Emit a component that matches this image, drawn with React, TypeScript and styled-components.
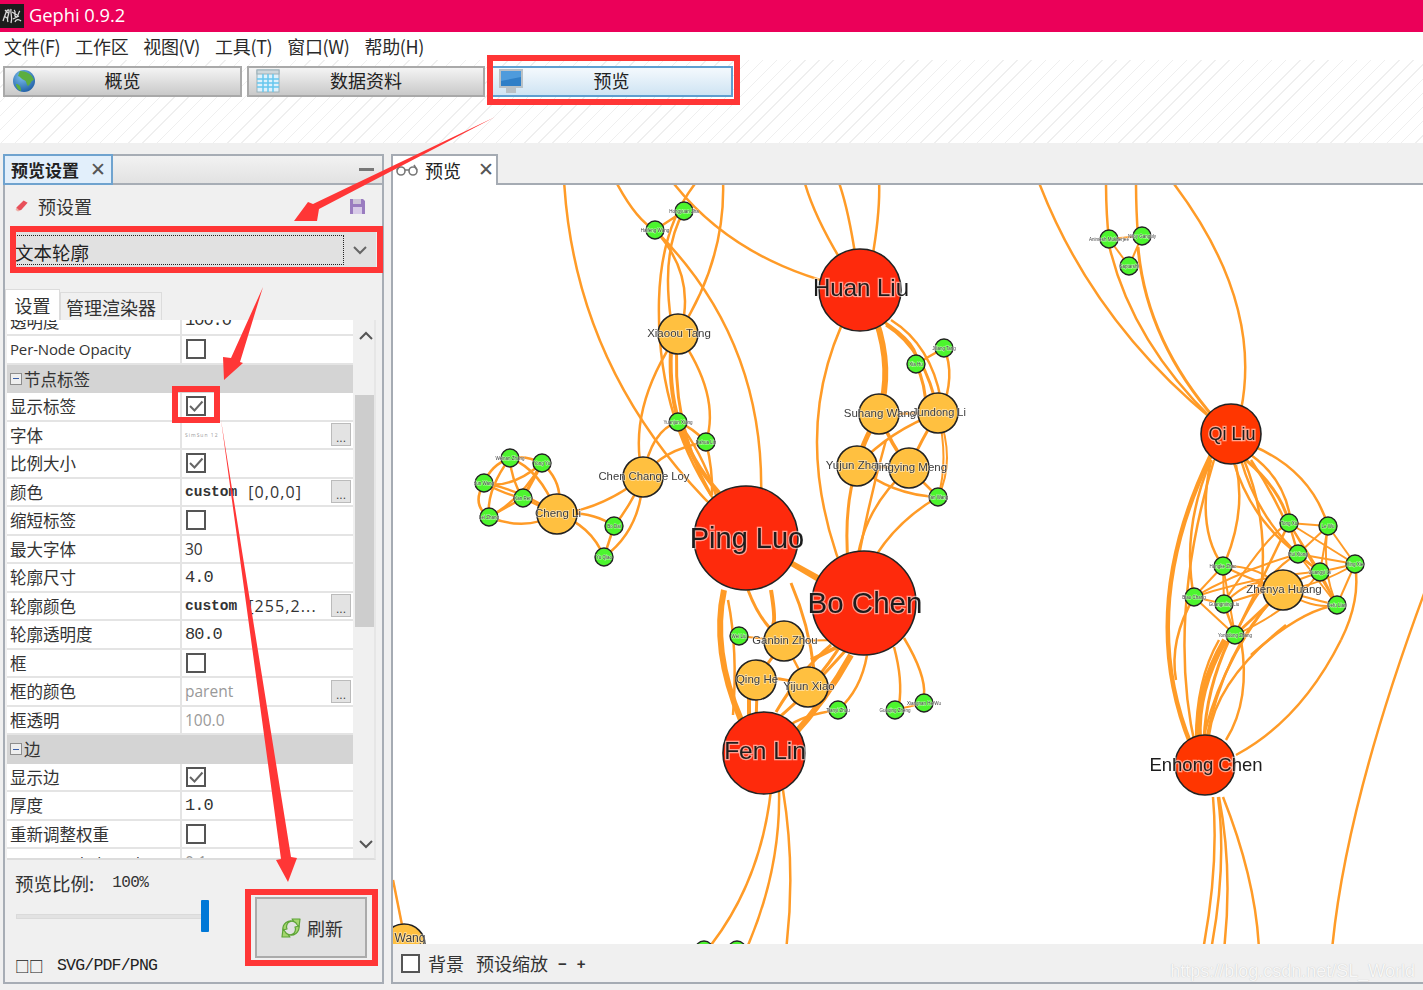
import styled, { createGlobalStyle } from 'styled-components';

const CJK = '"Noto Sans CJK SC", "Liberation Sans", sans-serif';
const SANS = '"Open Sans", "Noto Sans CJK SC", sans-serif';
const MONO = '"Liberation Mono", "Noto Sans CJK SC", monospace';

type RowData =
  | { kind: 'group'; label: string }
  | { kind: 'check'; label: string; checked: boolean }
  | { kind: 'text'; label: string; value: string; muted?: boolean; mono?: boolean; more?: boolean }
  | { kind: 'custom'; label: string; value: string };

const rows: RowData[] = [
  { kind: 'text', label: '透明度', value: '100.0', mono: true },
  { kind: 'check', label: 'Per-Node Opacity', checked: false },
  { kind: 'group', label: '节点标签' },
  { kind: 'check', label: '显示标签', checked: true },
  { kind: 'text', label: '字体', value: '', more: true },
  { kind: 'check', label: '比例大小', checked: true },
  { kind: 'custom', label: '颜色', value: '[0,0,0]' },
  { kind: 'check', label: '缩短标签', checked: false },
  { kind: 'text', label: '最大字体', value: '30' },
  { kind: 'text', label: '轮廓尺寸', value: '4.0', mono: true },
  { kind: 'custom', label: '轮廓颜色', value: '[255,2...' },
  { kind: 'text', label: '轮廓透明度', value: '80.0', mono: true },
  { kind: 'check', label: '框', checked: false },
  { kind: 'text', label: '框的颜色', value: 'parent', muted: true, more: true },
  { kind: 'text', label: '框透明', value: '100.0', muted: true },
  { kind: 'group', label: '边' },
  { kind: 'check', label: '显示边', checked: true },
  { kind: 'text', label: '厚度', value: '1.0', mono: true },
  { kind: 'check', label: '重新调整权重', checked: false },
  { kind: 'text', label: 'Min. rescaled weight', value: '0.1', muted: true },
];

// edges: path + stroke width, page coordinates
const edges: [string, number][] = [
  ['M563 180 Q575 390 745 538', 2.5],
  ['M614 180 Q635 220 654 230', 2.5],
  ['M654 230 Q765 340 760 500', 2.5],
  ['M670 180 Q735 265 859 290', 2.5],
  ['M697 180 Q660 225 658 300 Q655 420 720 510', 2.5],
  ['M722 180 Q725 260 677 334', 2.5],
  ['M654 230 Q695 275 680 330', 2.5],
  ['M683 211 Q660 250 670 320', 2.5],
  ['M683 211 L654 230', 2.5],
  ['M670 350 Q665 440 725 500', 4],
  ['M677 334 Q668 420 710 495', 3],
  ['M677 334 Q720 395 705 442', 2.5],
  ['M677 334 Q625 410 642 477', 2.5],
  ['M677 422 Q700 450 715 495', 2.5],
  ['M705 442 Q712 470 711 495', 2.5],
  ['M677 422 Q650 430 642 477', 2.5],
  ['M705 442 Q660 450 642 477', 2.5],
  ['M677 422 Q692 428 705 442', 2.5],
  ['M642 477 Q600 510 556 514', 2.5],
  ['M642 477 Q640 530 603 557', 2.5],
  ['M642 477 Q630 505 613 526', 2.5],
  ['M613 526 L603 557', 2.5],
  ['M556 514 Q590 510 613 526', 2.5],
  ['M556 514 Q590 525 603 557', 2.5],
  ['M509 458 Q525 455 541 463', 2.5],
  ['M509 458 Q490 465 483 483', 2.5],
  ['M509 458 Q510 480 522 498', 2.5],
  ['M509 458 Q485 490 488 517', 2.5],
  ['M509 458 Q540 470 556 514', 2.5],
  ['M541 463 Q510 490 483 483', 2.5],
  ['M541 463 L522 498', 3.5],
  ['M541 463 Q520 500 488 517', 2.5],
  ['M541 463 Q565 485 556 514', 2.5],
  ['M483 483 Q505 495 522 498', 2.5],
  ['M483 483 Q470 505 488 517', 2.5],
  ['M483 483 Q520 490 556 514', 2.5],
  ['M522 498 L488 517', 2.5],
  ['M522 498 L556 514', 2.5],
  ['M488 517 Q525 532 556 514', 2.5],
  ['M803 180 Q815 225 859 290', 2.5],
  ['M837 180 Q850 215 859 290', 2.5],
  ['M878 180 Q880 220 865 290', 2.5],
  ['M859 290 Q775 430 855 603', 2.5],
  ['M875 320 Q892 370 878 414', 6],
  ['M878 414 Q860 445 856 466', 5],
  ['M885 325 Q925 350 937 413', 3],
  ['M880 320 Q920 345 915 364', 3],
  ['M915 364 Q925 385 925 410', 3],
  ['M890 320 Q930 345 940 400', 2.5],
  ['M915 364 L943 348', 2.5],
  ['M943 348 Q955 375 940 413', 2.5],
  ['M878 414 Q890 445 908 468', 3.5],
  ['M937 413 Q920 440 908 468', 3],
  ['M878 414 L937 413', 2.5],
  ['M937 413 Q890 430 856 466', 2.5],
  ['M856 466 L908 468', 3],
  ['M937 413 Q955 460 937 497', 2],
  ['M937 413 Q948 460 937 497', 2],
  ['M856 466 Q890 495 937 497', 2.5],
  ['M908 468 L937 497', 2.5],
  ['M856 466 Q838 520 852 603', 3],
  ['M908 468 Q860 510 855 570', 2.5],
  ['M885 440 Q865 510 852 590', 2.5],
  ['M937 497 Q880 530 858 590', 2.5],
  ['M745 538 L863 603', 5],
  ['M745 538 Q800 570 850 600', 3],
  ['M723 590 Q710 650 740 720', 6],
  ['M727 600 Q737 650 732 715', 2.5],
  ['M747 590 Q760 625 783 641', 3],
  ['M770 590 Q775 620 772 625', 4],
  ['M790 583 Q808 625 813 670', 3],
  ['M738 636 L783 641', 2],
  ['M783 641 L840 640', 2],
  ['M748 690 L748 725', 4],
  ['M756 690 L755 725', 3],
  ['M755 680 Q780 675 807 687', 3],
  ['M783 641 L755 680', 3],
  ['M783 641 L807 687', 2.5],
  ['M810 660 L840 645', 4],
  ['M807 687 Q835 660 863 603', 3],
  ['M850 655 Q825 700 790 738', 6],
  ['M845 650 Q805 695 775 720', 3],
  ['M830 645 Q800 670 775 712', 3],
  ['M866 655 Q860 690 837 710', 2.5],
  ['M837 710 Q800 715 785 728', 2.5],
  ['M893 647 Q902 680 898 705', 2.5],
  ['M903 638 Q925 675 923 695', 2.5],
  ['M894 710 L923 703', 2],
  ['M770 790 Q760 880 710 945', 2.5],
  ['M778 790 Q780 870 745 950', 2.5],
  ['M782 790 Q795 870 785 950', 2.5],
  ['M392 880 L402 930', 2.5],
  ['M1037 180 Q1090 320 1212 420', 2.5],
  ['M1105 180 Q1105 215 1108 239', 2.5],
  ['M1108 245 Q1130 340 1212 420', 2.5],
  ['M1135 180 Q1135 210 1137 236', 2.5],
  ['M1137 247 Q1145 340 1215 420', 3],
  ['M1170 180 Q1262 300 1240 410', 2.5],
  ['M1108 239 L1141 236', 2],
  ['M1108 239 L1128 266', 2],
  ['M1141 236 L1128 266', 2],
  ['M1210 455 Q1135 610 1190 745', 4.5],
  ['M1213 460 Q1165 620 1195 750', 2.5],
  ['M1210 460 Q1195 530 1222 566', 2.5],
  ['M1235 465 Q1245 510 1225 560', 2.5],
  ['M1210 460 Q1180 530 1193 597', 2.5],
  ['M1245 460 Q1280 490 1288 523', 3],
  ['M1250 460 Q1270 490 1285 523', 2.5],
  ['M1250 455 Q1285 480 1290 523', 2.5],
  ['M1250 445 Q1310 470 1327 526', 2.5],
  ['M1232 460 Q1250 520 1297 554', 2.5],
  ['M1240 460 Q1260 530 1319 572', 2.5],
  ['M1243 460 Q1268 520 1260 590', 2.5],
  ['M1288 523 L1327 526', 2],
  ['M1288 523 L1297 554', 2.5],
  ['M1288 523 L1319 572', 2],
  ['M1288 523 L1354 564', 2],
  ['M1288 523 L1336 605', 2],
  ['M1288 523 Q1265 535 1222 604', 2],
  ['M1327 526 L1297 554', 2],
  ['M1327 526 L1319 572', 2],
  ['M1327 526 L1354 564', 2],
  ['M1327 526 Q1320 570 1336 605', 2],
  ['M1297 554 L1319 572', 2],
  ['M1297 554 L1354 564', 2],
  ['M1297 554 L1336 605', 2],
  ['M1319 572 L1354 564', 2],
  ['M1319 572 L1336 605', 2],
  ['M1354 564 L1336 605', 2],
  ['M1354 564 Q1320 585 1282 590', 2],
  ['M1282 590 Q1310 610 1336 605', 2],
  ['M1222 566 Q1260 565 1282 590', 2],
  ['M1222 566 L1193 597', 2],
  ['M1222 566 L1223 604', 2],
  ['M1222 566 L1234 635', 2],
  ['M1222 566 Q1270 590 1336 605', 2],
  ['M1193 597 L1223 604', 2],
  ['M1193 597 Q1240 570 1297 554', 2],
  ['M1193 597 L1234 635', 2],
  ['M1193 597 Q1260 575 1319 572', 2],
  ['M1223 604 L1234 635', 2.5],
  ['M1223 604 Q1255 570 1282 590', 2],
  ['M1223 604 Q1270 590 1319 572', 2],
  ['M1234 635 L1282 590', 3],
  ['M1234 635 Q1265 570 1297 554', 2.5],
  ['M1234 635 Q1270 560 1288 523', 2.5],
  ['M1234 635 Q1290 610 1319 572', 2],
  ['M1224 640 Q1195 690 1198 740', 6],
  ['M1228 640 Q1205 690 1203 740', 3],
  ['M1218 640 Q1195 680 1195 740', 2.5],
  ['M1240 640 Q1250 700 1225 740', 2.5],
  ['M1282 590 Q1225 640 1205 740', 2.5],
  ['M1270 600 Q1215 670 1200 750', 2.5],
  ['M1285 625 Q1215 680 1208 735', 2.5],
  ['M1340 640 Q1300 720 1235 755', 2.5],
  ['M1354 564 Q1360 600 1340 640', 2.5],
  ['M1250 655 Q1300 610 1336 605', 2.5],
  ['M1193 597 Q1168 640 1175 680', 2.5],
  ['M1212 797 Q1218 865 1202 950', 2.5],
  ['M1217 797 Q1226 865 1210 950', 2.5],
  ['M1218 797 Q1232 870 1223 950', 2.5],
  ['M1222 797 Q1255 880 1258 950', 2.5],
  ['M1430 575 Q1345 800 1331 950', 2.5],
];

const bigNodes: { x: number; y: number; r: number; fill: string; label: string; size: number; dy: number }[] = [
  { x: 859, y: 290, r: 41, fill: '#fe2a0c', label: 'Huan Liu', size: 24, dy: -3 },
  { x: 745, y: 538, r: 52, fill: '#fe2a0c', label: 'Ping Luo', size: 29, dy: 0 },
  { x: 863, y: 603, r: 52, fill: '#fe2a0c', label: 'Bo Chen', size: 29.5, dy: -1 },
  { x: 763, y: 753, r: 41, fill: '#fe2a0c', label: 'Fen Lin', size: 24.5, dy: -3 },
  { x: 1230, y: 434, r: 30, fill: '#ff3600', label: 'Qi Liu', size: 18, dy: 0 },
  { x: 1204, y: 765, r: 30, fill: '#ff3600', label: 'Enhong Chen', size: 18.5, dy: -1 },
  { x: 677, y: 334, r: 20, fill: '#ffc040', label: 'Xiaoou Tang', size: 11.5, dy: -1 },
  { x: 642, y: 477, r: 20, fill: '#ffc040', label: 'Chen Change Loy', size: 11.3, dy: -1 },
  { x: 556, y: 514, r: 20, fill: '#ffc040', label: 'Cheng Li', size: 11.5, dy: -1 },
  { x: 878, y: 414, r: 20, fill: '#ffc040', label: 'Suhang Wang', size: 11.5, dy: -1 },
  { x: 937, y: 413, r: 20, fill: '#ffc040', label: 'Jundong Li', size: 11, dy: -1 },
  { x: 856, y: 466, r: 20, fill: '#ffc040', label: 'Yujun Zhang', size: 11.5, dy: -1 },
  { x: 908, y: 468, r: 20, fill: '#ffc040', label: 'Jingying Meng', size: 11.5, dy: -1 },
  { x: 783, y: 641, r: 20, fill: '#ffc040', label: 'Ganbin Zhou', size: 11.3, dy: -1 },
  { x: 755, y: 680, r: 20, fill: '#ffc040', label: 'Qing He', size: 11.5, dy: -1 },
  { x: 807, y: 687, r: 20, fill: '#ffc040', label: 'Yijun Xiao', size: 11.5, dy: -1 },
  { x: 1282, y: 590, r: 20, fill: '#ffc040', label: 'Zhenya Huang', size: 11.5, dy: -1 },
  { x: 403, y: 945, r: 21, fill: '#ffc040', label: 'Wang', size: 12, dy: -7 },
];

const greenNodes: [number, number, string][] = [
  [683, 211, 'Hongyuan Zha'], [654, 230, 'Haifeng Wang'], [943, 348, 'Jiliang Tang'], [915, 364, 'Xia Hu'],
  [677, 422, 'Yuanjun Xiong'], [705, 442, 'Dahua Lin'], [509, 458, 'Weinan Zhang'], [541, 463, 'Yong Yu'],
  [483, 483, 'Jun Wang'], [522, 498, 'Kan Ren'], [488, 517, 'Lei Zhang'], [613, 526, 'Bo Dai'], [603, 557, 'Yu Qiao'],
  [937, 497, 'Yan Wang'], [738, 636, 'Wei Liu'], [837, 710, 'Tianyi Zhou'], [894, 710, 'Guoqing Zheng'],
  [923, 703, 'Xiangnan He Wu'], [1108, 239, 'Animesh Mukherjee'], [1141, 236, 'Niloy Ganguly'], [1128, 266, 'Saptarshi'],
  [1288, 523, 'Tong Xu'], [1327, 526, 'Le Wu'], [1297, 554, 'Hui Xiong'], [1319, 572, 'Guangyi Lv'],
  [1354, 564, 'Xing Xie'], [1336, 605, 'Defu Lian'], [1222, 566, 'Hongke Zhao'], [1193, 597, 'Biao Chang'],
  [1223, 604, 'Guangming Liu'], [1234, 635, 'Yongdong Zhang'], [703, 950, ''], [736, 950, ''],
];

const GlobalStyle = createGlobalStyle`
  html, body {
    margin: 0;
    padding: 0;
    background: #f0f0f0;
    overflow: hidden;
  }
  * {
    box-sizing: border-box;
  }
`;

const Window = styled.div`
  position: relative;
  width: 1423px;
  height: 990px;
  overflow: hidden;
  display: flex;
  flex-direction: column;
  background: #f0f0f0;
  color: #222;
  font-family: ${CJK};
`;

const TitleBar = styled.div`
  display: flex;
  align-items: center;
  gap: 5px;
  height: 32px;
  flex: none;
  padding-bottom: 4px;
  background: #eb0059;
  color: #fff;
  font-family: ${SANS};
  font-size: 18.3px;
`;

const MenuBar = styled.div`
  display: flex;
  align-items: center;
  gap: 15px;
  height: 28px;
  flex: none;
  padding-left: 4px;
  background: #fff;
  font-size: 18px;
  letter-spacing: -0.35px;
  color: #2a2a2a;
`;

const Toolbar = styled.div`
  display: flex;
  align-items: flex-start;
  gap: 5px;
  height: 83px;
  flex: none;
  padding: 6px 0 0 3px;
  background: repeating-linear-gradient(135deg, #fff 0 9px, #efefef 9px 10px);
`;

const ModeButton = styled.div<{ $width: number; $active?: boolean }>`
  position: relative;
  display: flex;
  align-items: center;
  justify-content: center;
  width: ${p => p.$width}px;
  height: 31px;
  padding-bottom: 3px;
  border: 2px solid ${p => (p.$active ? '#5f9fd0' : '#a9a9a9')};
  background: ${p =>
    p.$active ? 'linear-gradient(#f4f9fd, #cfe4f3)' : 'linear-gradient(#f4f4f4, #c9c9c9)'};
  font-size: 18px;
  color: #222;
  svg {
    position: absolute;
    left: 7px;
    top: 1px;
  }
`;

const Workspace = styled.div`
  display: flex;
  gap: 7px;
  flex: 1;
  min-height: 0;
  padding: 11px 0 6px 3px;
`;

const LeftPanel = styled.section`
  display: flex;
  flex-direction: column;
  width: 381px;
  flex: none;
`;

const PanelTabs = styled.div`
  display: flex;
  align-items: stretch;
  height: 31px;
  flex: none;
`;

const ActiveDockTab = styled.div`
  display: flex;
  align-items: center;
  gap: 11px;
  width: 110px;
  padding-left: 6px;
  border: 2px solid #6fa3cf;
  background: #e2effb;
  font-size: 17px;
  font-weight: 700;
  color: #222;
`;

const CloseMark = styled.span`
  font-family: "Liberation Sans", sans-serif;
  font-size: 19px;
  font-weight: 400;
  line-height: 1;
  color: #555;
`;

const DockStrip = styled.div`
  flex: 1;
  display: flex;
  align-items: center;
  justify-content: flex-end;
  padding-right: 8px;
  border-top: 2px solid #a7adb5;
  border-right: 2px solid #a7adb5;
  border-bottom: 2px solid #a7adb5;
  background: linear-gradient(#f2f2f2, #e2e2e2);
`;

const Minimize = styled.i`
  display: block;
  width: 15px;
  height: 3px;
  background: #777;
`;

const PanelBody = styled.div`
  flex: 1;
  display: flex;
  flex-direction: column;
  min-height: 0;
  padding: 0 2px;
  border: 2px solid #a7adb5;
  border-top: 0;
  background: #f0f0f0;
`;

const PresetRow = styled.div`
  display: flex;
  align-items: center;
  gap: 8px;
  height: 42px;
  flex: none;
  padding: 0 15px 0 7px;
  font-size: 18px;
  color: #333;
`;

const PresetSave = styled.span`
  margin-left: auto;
  display: flex;
`;

const Combo = styled.div`
  display: flex;
  align-items: center;
  height: 36px;
  flex: none;
  margin: 5px 4px 0 6px;
  padding: 2px 0 2px 1px;
  background: #e1e1e1;
`;

const ComboValue = styled.div`
  display: flex;
  align-items: center;
  width: 330px;
  height: 30px;
  padding-top: 3px;
  border: 1px dotted #222;
  font-size: 18.5px;
  color: #222;
`;

const ComboArrow = styled.div`
  flex: 1;
  display: flex;
  justify-content: center;
  color: #666;
`;

const InnerTabs = styled.div`
  display: flex;
  align-items: flex-end;
  height: 31px;
  flex: none;
  margin: 21px 0 0 -2px;
`;

const InnerTab = styled.div<{ $active?: boolean }>`
  display: flex;
  align-items: center;
  justify-content: center;
  width: ${p => (p.$active ? 55 : 102)}px;
  height: ${p => (p.$active ? 31 : 28)}px;
  border: 1px solid #dcdcdc;
  border-bottom: 0;
  background: ${p => (p.$active ? '#fff' : '#f0f0f0')};
  font-size: 18px;
  color: #333;
`;

const PropertyFrame = styled.div`
  display: grid;
  grid-template-columns: 346px 26px;
  height: 540px;
  flex: none;
  margin-right: 4px;
  border-bottom: 2px solid #dcdcdc;
  border-right: 2px solid #e6e6e6;
  overflow: hidden;
  background: #fff;
`;

const PropertyList = styled.div`
  overflow: hidden;
  background: #fff;
`;

const PropertyRows = styled.div`
  margin-top: -12.5px;
`;

const Row = styled.div<{ $group?: boolean }>`
  display: grid;
  grid-template-columns: 173px 1fr;
  height: 28.5px;
  align-items: stretch;
  background: ${p => (p.$group ? '#d4d4d4' : '#fff')};
  border-bottom: ${p => (p.$group ? '0' : '2px solid #e4e4e4')};
`;

const RowLabel = styled.div<{ $latin?: boolean }>`
  display: flex;
  align-items: center;
  padding-left: 3px;
  font-family: ${p => (p.$latin ? SANS : CJK)};
  font-size: ${p => (p.$latin ? 15 : 16.5)}px;
  letter-spacing: ${p => (p.$latin ? -0.15 : 0)}px;
  color: #333;
  white-space: nowrap;
`;

const GroupRow = styled.div`
  display: flex;
  align-items: center;
  gap: 2px;
  padding-left: 3px;
  grid-column: 1 / 3;
  font-size: 16.5px;
  color: #333;
`;

const Toggle = styled.span`
  display: flex;
  align-items: center;
  justify-content: center;
  width: 12px;
  height: 12px;
  border: 1px solid #8d8d8d;
  background: #eee;
  &::after {
    content: '';
    width: 6px;
    height: 1px;
    background: #3a5fa8;
  }
`;

const RowValue = styled.div`
  display: flex;
  align-items: center;
  padding-left: 3px;
  border-left: 2px solid #e4e4e4;
  white-space: nowrap;
  overflow: hidden;
`;

const ValueText = styled.span<{ $muted?: boolean; $mono?: boolean }>`
  font-family: ${p => (p.$mono ? MONO : SANS)};
  font-size: ${p => (p.$mono ? 17 : 15.5)}px;
  letter-spacing: ${p => (p.$mono ? -1 : 0)}px;
  color: ${p => (p.$muted ? '#999' : '#333')};
`;

const CustomTag = styled.span`
  font-family: ${MONO};
  font-size: 14.5px;
  font-weight: 700;
  color: #333;
`;

const CustomValue = styled.span`
  margin-left: 11px;
  font-family: ${SANS};
  font-size: 16px;
  letter-spacing: 1.1px;
  color: #333;
`;

const FontSample = styled.span`
  font-family: ${SANS};
  font-size: 5px;
  letter-spacing: 1px;
  color: #999;
`;

const CheckBox = styled.span`
  display: flex;
  align-items: center;
  justify-content: center;
  width: 20px;
  height: 20px;
  margin-left: 1px;
  border: 2px solid #555;
  background: #fff;
`;

const MoreButton = styled.span`
  margin-left: auto;
  margin-right: 2px;
  flex: none;
  display: flex;
  align-items: flex-end;
  justify-content: center;
  width: 20px;
  height: 23px;
  border: 1px solid #bbb;
  background: #e3e3e3;
  font-family: "Liberation Sans", sans-serif;
  font-size: 12px;
  line-height: 14px;
  color: #444;
`;

const ScrollBar = styled.div`
  display: flex;
  flex-direction: column;
  align-items: center;
  background: #f0f0f0;
`;

const ScrollArrow = styled.div<{ $bottom?: boolean }>`
  display: flex;
  height: 18px;
  margin-top: ${p => (p.$bottom ? 'auto' : '8px')};
  margin-bottom: ${p => (p.$bottom ? '4px' : '0')};
  color: #555;
`;

const ScrollThumb = styled.div`
  width: 22px;
  height: 232px;
  margin-top: 49px;
  background: #cdcdcd;
`;

const PanelFooter = styled.div`
  flex: 1;
  display: grid;
  grid-template-columns: 240px 1fr;
  min-height: 0;
`;

const FooterControls = styled.div`
  display: flex;
  flex-direction: column;
  padding: 11px 0 0 8px;
`;

const ScaleLine = styled.div`
  display: flex;
  align-items: center;
  gap: 18px;
  height: 24px;
  font-size: 18.5px;
  color: #333;
`;

const ScalePercent = styled.span`
  font-family: ${MONO};
  font-size: 16px;
  letter-spacing: -0.6px;
`;

const SliderTrack = styled.div`
  position: relative;
  width: 188px;
  height: 5px;
  margin: 19px 0 0 1px;
  background: #e2e2e2;
  border: 1px solid #dadada;
`;

const SliderThumb = styled.div`
  position: absolute;
  right: -6px;
  top: -15px;
  width: 8px;
  height: 32px;
  border-radius: 1px;
  background: #0078d7;
`;

const ExportLine = styled.div`
  display: flex;
  align-items: center;
  gap: 14px;
  margin-top: 36px;
  font-size: 15px;
  color: #222;
`;

const ExportBoxes = styled.span`
  font-size: 14.5px;
  font-weight: 700;
  letter-spacing: -0.5px;
`;

const ExportText = styled.span`
  font-family: "Liberation Mono", monospace;
  font-size: 16.5px;
  letter-spacing: -0.8px;
`;

const RefreshWrap = styled.div`
  display: flex;
  align-items: flex-start;
  padding: 37px 0 0 8px;
`;

const RefreshButton = styled.div`
  display: flex;
  align-items: center;
  justify-content: center;
  gap: 4px;
  width: 112px;
  height: 61px;
  border: 2px solid #aaa;
  background: #e1e1e1;
  font-size: 18px;
  color: #333;
`;

const RightPanel = styled.section`
  flex: 1;
  display: flex;
  flex-direction: column;
  min-width: 0;
`;

const PreviewTabs = styled.div`
  display: flex;
  height: 31px;
  flex: none;
  border-bottom: 2px solid #a5abb3;
`;

const PreviewTab = styled.div`
  display: flex;
  align-items: center;
  width: 107px;
  height: 31px;
  padding-left: 2px;
  padding-bottom: 2px;
  border: 2px solid #a5abb3;
  border-bottom: 0;
  background: #fff;
  font-size: 18px;
  color: #222;
`;

const PreviewTabLabel = styled.span`
  margin-left: 6px;
  margin-right: 17px;
`;

const Canvas = styled.div`
  flex: 1;
  min-height: 0;
  border-left: 2px solid #a5abb3;
  background: #fff;
  overflow: hidden;
  svg {
    display: block;
    filter: blur(0.35px);
  }
`;

const PreviewFooter = styled.div`
  display: flex;
  align-items: center;
  height: 40px;
  flex: none;
  padding: 0 8px;
  border-left: 2px solid #a5abb3;
  border-bottom: 2px solid #a5abb3;
  background: #f0f0f0;
  font-size: 18px;
  color: #333;
`;

const FooterCheck = styled(CheckBox)`
  width: 19px;
  height: 19px;
  margin: 0 8px 0 0;
`;

const ZoomMark = styled.span`
  margin-left: 10px;
  font-family: "Liberation Sans", sans-serif;
  font-size: 15px;
  font-weight: 700;
`;

const FooterLabel = styled.span`
  margin-right: 12px;
`;

const Watermark = styled.span`
  align-self: flex-end;
  margin-left: auto;
  font-family: "Liberation Sans", sans-serif;
  font-size: 18px;
  color: #f7f7f7;
  text-shadow: 0 0 1px #bcbcbc;
`;

const NodeLabel = styled.text<{ $size: number; $hair?: number }>`
  font-family: "Liberation Sans", sans-serif;
  font-size: ${p => p.$size}px;
  text-anchor: middle;
  dominant-baseline: central;
  fill: ${p => (p.$size > 14 ? '#1c1c1c' : '#3b3b3b')};
  stroke: rgba(255, 255, 255, 0.55);
  stroke-width: ${p => p.$hair ?? (p.$size > 14 ? 2.5 : 1.5)}px;
  paint-order: stroke;
`;

const Annotations = styled.svg`
  position: absolute;
  left: 0;
  top: 0;
  pointer-events: none;
`;

const Chevron = ({ up, size = 16 }: { up?: boolean; size?: number }) => (
  <svg width={size} height={size} viewBox="0 0 16 16" fill="none" stroke="currentColor" strokeWidth="2">
    <path d={up ? 'M2 11 L8 5 L14 11' : 'M2 5 L8 11 L14 5'} />
  </svg>
);

const Tick = () => (
  <svg width="16" height="16" viewBox="0 0 16 16" fill="none" stroke="#666" strokeWidth="2">
    <path d="M2 8 L6.5 12.5 L14.5 3.5" />
  </svg>
);

const RefreshIcon = () => {
  const top = 'M4 14 A8 8 0 0 1 15 5.5 L13 3 L21 3 L20 11 L18 8.5 A5 5 0 0 0 8 13 Z';
  const bottom = 'M20 10 A8 8 0 0 1 9 18.5 L11 21 L3 21 L4 13 L6 15.5 A5 5 0 0 0 16 11 Z';
  return (
    <svg width="24" height="24" viewBox="0 0 24 24" fill="#a5d66e" stroke="#5da437" strokeWidth="1.2" strokeLinejoin="round">
      <path d={top} />
      <path d={bottom} />
    </svg>
  );
};

function Graph() {
  return (
    <svg width="1031" height="759" viewBox="392 185 1031 759">
      {edges.map(([d, w], i) => (
        <path key={i} d={d} fill="none" stroke="#ff9b27" strokeWidth={w} />
      ))}
      {greenNodes.map(([x, y, label]) => (
        <g key={`${x}-${y}`}>
          <circle cx={x} cy={y} r={9} fill="#4cf52e" stroke="#222" strokeWidth={1.4} />
          <NodeLabel x={x} y={y} $size={4.5} $hair={1}>
            {label}
          </NodeLabel>
        </g>
      ))}
      {bigNodes.map(n => (
        <circle key={n.label} cx={n.x} cy={n.y} r={n.r} fill={n.fill} stroke="#222" strokeWidth={1.6} />
      ))}
      {bigNodes.map(n => (
        <NodeLabel key={n.label} x={n.x + (n.label === 'Wang' ? 6 : 1)} y={n.y + n.dy} $size={n.size}>
          {n.label}
        </NodeLabel>
      ))}
    </svg>
  );
}

function PropertyRow({ row }: { row: RowData }) {
  if (row.kind === 'group') {
    return (
      <Row $group>
        <GroupRow>
          <Toggle />
          {row.label}
        </GroupRow>
      </Row>
    );
  }
  return (
    <Row>
      <RowLabel $latin={/^[A-Z]/.test(row.label)}>{row.label}</RowLabel>
      <RowValue>
        {row.kind === 'check' && <CheckBox>{row.checked && <Tick />}</CheckBox>}
        {row.kind === 'custom' && (
          <>
            <CustomTag>custom</CustomTag>
            <CustomValue>{row.value}</CustomValue>
            <MoreButton>...</MoreButton>
          </>
        )}
        {row.kind === 'text' && (
          <>
            {row.label === '字体' ? (
              <FontSample>SimSun 12</FontSample>
            ) : (
              <ValueText $muted={row.muted} $mono={row.mono}>
                {row.value}
              </ValueText>
            )}
            {row.more && <MoreButton>...</MoreButton>}
          </>
        )}
      </RowValue>
    </Row>
  );
}

export default function App() {
  return (
    <Window>
      <GlobalStyle />
      <TitleBar>
        <svg width="24" height="24" viewBox="0 0 24 24" style={{ flex: 'none', marginTop: 4 }}>
          <rect width="24" height="24" fill="#1c1c1c" />
          <path
            d="M3 17 C6 8 7 5 9 6 C10 9 6 14 8 18 M11 5 C10 10 13 12 11 19 M14 6 C17 8 13 12 16 13 C19 12 18 8 20 7 M15 18 C16 15 19 15 21 17 M5 6 L8 9 M4 12 L7 14 M12 8 L17 11 M13 15 L19 12"
            fill="none"
            stroke="#dcdcdc"
            strokeWidth="1.3"
          />
        </svg>
        Gephi 0.9.2
      </TitleBar>
      <MenuBar>
        {['文件(F)', '工作区', '视图(V)', '工具(T)', '窗口(W)', '帮助(H)'].map(m => (
          <span key={m}>{m}</span>
        ))}
      </MenuBar>
      <Toolbar>
        <ModeButton $width={239}>
          <svg width="24" height="24" viewBox="0 0 24 24">
            <defs>
              <radialGradient id="globe" cx="0.4" cy="0.3" r="0.8">
                <stop offset="0" stopColor="#7cc0ee" />
                <stop offset="1" stopColor="#17569f" />
              </radialGradient>
            </defs>
            <circle cx="12" cy="12" r="11" fill="url(#globe)" />
            <path d="M8 2 C14 2 20 5 22 11 C19 11 19 15 16 17 C14 15 15 12 12 11 C9 10 8 7 6 7 Z" fill="#5cae3f" />
            <path d="M4 15 C7 15 9 17 9 22 C6 21 4 18 4 15 Z" fill="#5cae3f" />
          </svg>
          概览
        </ModeButton>
        <ModeButton $width={238}>
          <svg width="24" height="24" viewBox="0 0 24 24">
            <rect x="1" y="1" width="22" height="22" fill="#dff1fb" stroke="#9ab0b8" />
            <rect x="1" y="1" width="22" height="4" fill="#cfd8dc" stroke="#9ab0b8" />
            <path d="M7 5 V23 M12 5 V23 M17 5 V23 M1 10 H23 M1 14 H23 M1 18 H23" stroke="#66c6ee" strokeWidth="1.5" />
          </svg>
          数据资料
        </ModeButton>
        <ModeButton $width={243} $active>
          <svg width="24" height="26" viewBox="0 0 24 26">
            <rect x="0" y="0" width="24" height="19" fill="#b9c1c6" />
            <rect x="2" y="2" width="20" height="15" fill="#2f7fc7" />
            <path d="M2 2 H22 V8 L2 12 Z" fill="#4e9bdc" />
            <rect x="7" y="19" width="10" height="5" fill="#b9c1c6" />
          </svg>
          预览
        </ModeButton>
      </Toolbar>
      <Workspace>
        <LeftPanel>
          <PanelTabs>
            <ActiveDockTab>
              预览设置<CloseMark>✕</CloseMark>
            </ActiveDockTab>
            <DockStrip>
              <Minimize />
            </DockStrip>
          </PanelTabs>
          <PanelBody>
            <PresetRow>
              <svg width="16" height="16" viewBox="0 0 20 18">
                <path d="M3 11 L12 2 L17 5 L9 14 L5 15 Z" fill="#e8505a" />
                <path d="M3 11 L7 15 L5 16 L2 14 Z" fill="#eeb0a8" />
              </svg>
              预设置
              <PresetSave>
                <svg width="15" height="15" viewBox="0 0 15 15">
                  <path d="M0 0 H13 L15 2 V15 H0 Z" fill="#9a7cc0" />
                  <rect x="3" y="0" width="8" height="5" fill="#cdc5d8" />
                  <rect x="3" y="8" width="9" height="7" fill="#d8cbe8" />
                </svg>
              </PresetSave>
            </PresetRow>
            <Combo>
              <ComboValue>文本轮廓</ComboValue>
              <ComboArrow>
                <Chevron />
              </ComboArrow>
            </Combo>
            <InnerTabs>
              <InnerTab $active>设置</InnerTab>
              <InnerTab>管理渲染器</InnerTab>
            </InnerTabs>
            <PropertyFrame>
              <PropertyList>
                <PropertyRows>
                  {rows.map(r => (
                    <PropertyRow key={r.label} row={r} />
                  ))}
                </PropertyRows>
              </PropertyList>
              <ScrollBar>
                <ScrollArrow>
                  <Chevron up />
                </ScrollArrow>
                <ScrollThumb />
                <ScrollArrow $bottom>
                  <Chevron />
                </ScrollArrow>
              </ScrollBar>
            </PropertyFrame>
            <PanelFooter>
              <FooterControls>
                <ScaleLine>
                  预览比例:
                  <ScalePercent>100%</ScalePercent>
                </ScaleLine>
                <SliderTrack>
                  <SliderThumb />
                </SliderTrack>
                <ExportLine>
                  <ExportBoxes>□□</ExportBoxes>
                  <ExportText>SVG/PDF/PNG</ExportText>
                </ExportLine>
              </FooterControls>
              <RefreshWrap>
                <RefreshButton>
                  <RefreshIcon />
                  刷新
                </RefreshButton>
              </RefreshWrap>
            </PanelFooter>
          </PanelBody>
        </LeftPanel>
        <RightPanel>
          <PreviewTabs>
            <PreviewTab>
              <svg width="24" height="12" viewBox="0 0 24 12" fill="none" stroke="#777" strokeWidth="1.6">
                <circle cx="6" cy="7" r="4" />
                <circle cx="18" cy="7" r="4" />
                <path d="M10 6 H14 M2 6 L5 1 M22 6 L19 1" />
              </svg>
              <PreviewTabLabel>预览</PreviewTabLabel>
              <CloseMark>✕</CloseMark>
            </PreviewTab>
          </PreviewTabs>
          <Canvas>
            <Graph />
          </Canvas>
          <PreviewFooter>
            <FooterCheck />
            <FooterLabel>背景</FooterLabel>
            预设缩放
            <ZoomMark>−</ZoomMark>
            <ZoomMark>+</ZoomMark>
            <Watermark>https://blog.csdn.net/SL_World</Watermark>
          </PreviewFooter>
        </RightPanel>
      </Workspace>
      <Annotations width="1423" height="990" viewBox="0 0 1423 990">
        <g fill="none" stroke="#ff3636" strokeWidth="6">
          <rect x="490" y="58" width="247" height="44" />
          <rect x="13" y="229" width="367" height="41" />
          <rect x="175" y="389" width="42" height="31" />
          <rect x="248" y="892" width="127" height="71" />
        </g>
        <g fill="#ff3636">
          <polygon points="495,117 319,209 317,221 294,221 308,202 313,204" />
          <polygon points="263,287 240,362 243,363 224,380 223,357 231,358" />
          <polygon points="221,420 291,857 297,858 288,882 276,860 281,859" />
        </g>
      </Annotations>
    </Window>
  );
}
